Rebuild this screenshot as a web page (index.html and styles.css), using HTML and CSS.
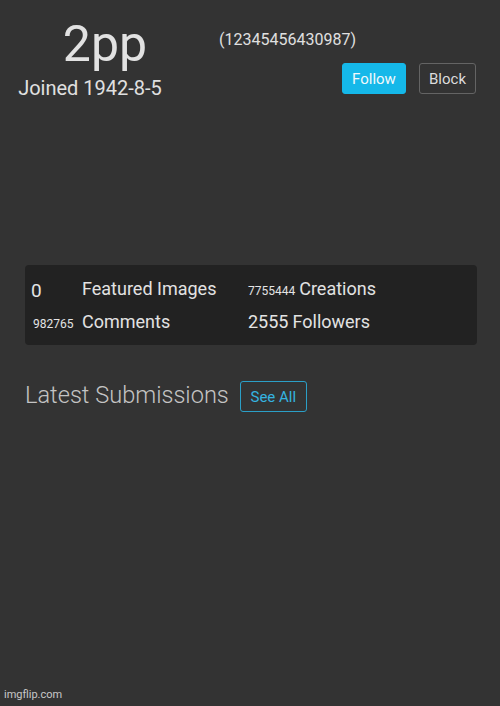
FILE: index.html
```html
<!DOCTYPE html>
<html>
<head>
<meta charset="utf-8">
<link rel="stylesheet" href="styles.css">
</head>
<body>
<div class="page">
  <header class="profile">
    <div class="identity">
      <div class="name">2pp</div>
      <div class="joined">Joined 1942-8-5</div>
    </div>
    <div class="side">
      <div class="uid">(12345456430987)</div>
      <div class="actions">
        <button class="btn btn-follow">Follow</button>
        <button class="btn btn-block">Block</button>
      </div>
    </div>
  </header>

  <section class="stats">
    <div class="stat stat-left"><span class="num big">0</span><span class="label">Featured Images</span></div>
    <div class="stat"><span class="num small">7755444</span><span class="label">Creations</span></div>
    <div class="stat stat-left"><span class="num small indent">982765</span><span class="label">Comments</span></div>
    <div class="stat"><span class="num mid">2555</span><span class="label">Followers</span></div>
  </section>

  <section class="latest">
    <h2 class="latest-title">Latest Submissions</h2>
    <button class="btn btn-see">See All</button>
  </section>

  <footer class="watermark">imgflip.com</footer>
</div>
</body>
</html>
```
FILE: styles.css
```css
* { box-sizing: border-box; }
html, body {
  margin: 0;
  padding: 0;
  background: #333333;
  font-family: Roboto, "Liberation Sans", Arial, sans-serif;
  color: #dedede;
}
.page {
  width: 500px;
  height: 706px;
  display: flex;
  flex-direction: column;
  padding: 17px 24px 0 17px;
}
.profile {
  display: flex;
  justify-content: space-between;
}
.identity {
  display: flex;
  flex-direction: column;
  align-items: center;
  width: 146px;
}
.name {
  font-size: 50px;
  line-height: 54px;
  color: #e2e2e2;
  margin-left: 30px;
}
.joined {
  font-size: 20px;
  line-height: 24px;
  color: #e0e0e0;
  white-space: nowrap;
  margin-top: 5px;
}
.side {
  display: flex;
  flex-direction: column;
  align-items: flex-end;
}
.uid {
  font-size: 16px;
  line-height: 20px;
  margin-top: 13px;
  margin-right: 120px;
  color: #e0e0e0;
}
.actions {
  display: flex;
  gap: 13px;
  margin-top: 13px;
}
.btn {
  font-family: inherit;
  font-size: 15px;
  height: 31px;
  border-radius: 3px;
  padding: 0 8px;
  cursor: pointer;
}
.btn-follow {
  background: #15b8e9;
  border: 1px solid #15b8e9;
  color: #f2f8fb;
  width: 64px;
}
.btn-block {
  background: transparent;
  border: 1px solid #646464;
  color: #dcdcdc;
  width: 57px;
}
.stats {
  margin-top: 165px;
  margin-left: 8px;
  width: 452px;
  height: 80px;
  background: #222222;
  border-radius: 4px;
  display: grid;
  grid-template-columns: 217px 1fr;
  grid-auto-rows: 33px;
  padding: 7px 0 0 6px;
  align-content: start;
}
.stat {
  display: flex;
  align-items: baseline;
  white-space: nowrap;
  line-height: 33px;
}
.num { color: #e4e4e4; }
.stat-left .num { width: 51px; }
.num.big { font-size: 19px; position: relative; top: 2px; }
.num.small { font-size: 12px; padding-right: 4px; }
.num.indent { padding-left: 2px; }
.num.mid { font-size: 18px; padding-right: 4px; }
.label {
  font-size: 18px;
  color: #e2e2e2;
}
.latest {
  display: flex;
  align-items: center;
  gap: 11px;
  margin-top: 32px;
  margin-left: 8px;
}
.latest-title {
  margin: 0;
  font-size: 23.6px;
  font-weight: 300;
  color: #c4c4c4;
}
.btn-see {
  background: transparent;
  border: 1px solid #2b9fc7;
  color: #35b4e0;
  height: 31px;
  width: 67px;
  margin-top: 4px;
}
.watermark {
  margin-top: auto;
  margin-left: -13px;
  margin-bottom: 5px;
  font-size: 11px;
  color: #c8c8c8;
}
```
